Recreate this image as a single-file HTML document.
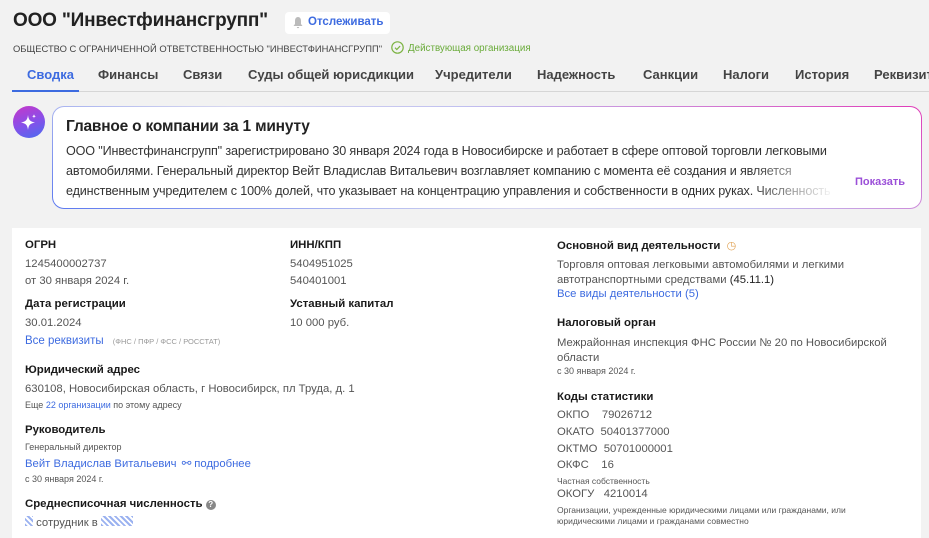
<!DOCTYPE html>
<html><head><meta charset="utf-8"><style>
*{margin:0;padding:0;box-sizing:border-box}
body{width:929px;height:529px;overflow:hidden;background:#f2f2f2;font-family:"Liberation Sans",sans-serif;color:#222;position:relative}
.a{position:absolute;white-space:nowrap}
.h{font-weight:bold;font-size:11.4px;color:#1a1a1a}
.v{font-size:11.3px;color:#555}
.s{font-size:9px;color:#555}
.l{color:#3d6be0}
.tab{position:absolute;top:67px;font-size:13px;font-weight:bold;color:#444}
</style></head><body>
<div class="a" style="left:13px;top:10px;font-size:19px;font-weight:bold;color:#222;letter-spacing:-0.2px">ООО "Инвестфинансгрупп"</div>
<div class="a" style="left:285px;top:12px;width:105px;height:22px;background:#fff;border-radius:4px"></div>
<svg class="a" style="left:292px;top:16px" width="12" height="13" viewBox="0 0 12 13"><path d="M6 1C3.8 1 3 3 3 5v3L1.5 10h9L9 8V5C9 3 8.2 1 6 1z M4.8 11a1.2 1.2 0 0 0 2.4 0z" fill="#bbb"/></svg>
<div class="a" style="left:308px;top:16px;font-size:11.5px;font-weight:bold;color:#3d6be0">Отслеживать</div>
<div class="a" style="left:13px;top:43px;font-size:9.4px;color:#444">ОБЩЕСТВО С ОГРАНИЧЕННОЙ ОТВЕТСТВЕННОСТЬЮ "ИНВЕСТФИНАНСГРУПП"</div>
<svg class="a" style="left:391px;top:41px" width="13" height="13" viewBox="0 0 13 13"><circle cx="6.5" cy="6.5" r="5.7" fill="none" stroke="#7cb342" stroke-width="1.2"/><path d="M4 6.7l1.8 1.8 3.3-3.4" fill="none" stroke="#7cb342" stroke-width="1.2"/></svg>
<div class="a" style="left:408px;top:43px;font-size:9.8px;color:#6aab3a">Действующая организация</div>
<div class="a" style="left:12px;top:91px;width:917px;height:1px;background:#d6d6d6"></div>
<div class="a" style="left:12px;top:90px;width:67px;height:2px;background:#3d6be0"></div>
<div class="tab" style="left:27px;color:#3d6be0">Сводка</div>
<div class="tab" style="left:98px">Финансы</div>
<div class="tab" style="left:183px">Связи</div>
<div class="tab" style="left:248px">Суды общей юрисдикции</div>
<div class="tab" style="left:435px">Учредители</div>
<div class="tab" style="left:537px">Надежность</div>
<div class="tab" style="left:643px">Санкции</div>
<div class="tab" style="left:723px">Налоги</div>
<div class="tab" style="left:795px">История</div>
<div class="tab" style="left:874px">Реквизиты</div>

<div class="a" style="left:13px;top:106px;width:32px;height:32px;border-radius:50%;background:linear-gradient(160deg,#c837c8,#8a4ee8 50%,#4a6cf0)"></div>
<svg class="a" style="left:19px;top:112px" width="20" height="20" viewBox="0 0 20 20"><path d="M9 3C9.6 8 11 9.5 16 10.5 11 11.5 9.6 13 9 18 8.4 13 7 11.5 2 10.5 7 9.5 8.4 8 9 3z" fill="#fff"/><path d="M15 2c.2 1.6.7 2.1 2.3 2.3-1.6.2-2.1.7-2.3 2.3-.2-1.6-.7-2.1-2.3-2.3 1.6-.2 2.1-.7 2.3-2.3z" fill="#fff"/></svg>
<div class="a" style="left:52px;top:106px;width:870px;height:103px;border-radius:12px;padding:1px;background:linear-gradient(200deg,#e03bb8,#c0c0f0 40%,#d8d8f0 60%,#5b78f0)"><div style="width:100%;height:100%;background:#fff;border-radius:11px"></div></div>
<div class="a" style="left:66px;top:118px;font-size:15.5px;font-weight:bold;color:#222;letter-spacing:-0.2px">Главное о компании за 1 минуту</div>
<div class="a" style="left:66px;top:141px;font-size:12.6px;line-height:20px;color:#333;width:780px;overflow:hidden;height:60px;letter-spacing:-0.15px">ООО "Инвестфинансгрупп" зарегистрировано 30 января 2024 года в Новосибирске и работает в сфере оптовой торговли легковыми<br>автомобилями. Генеральный директор Вейт Владислав Витальевич возглавляет компанию с момента её создания и является<br>единственным учредителем с 100% долей, что указывает на концентрацию управления и собственности в одних руках. Численность</div>
<div class="a" style="left:750px;top:160px;width:100px;height:44px;background:linear-gradient(90deg,rgba(255,255,255,0),#fff 85%)"></div>
<div class="a" style="left:855px;top:176px;font-size:11px;font-weight:bold;color:#9b4fd8">Показать</div>

<div class="a" style="left:12px;top:228px;width:909px;height:310px;background:#fff"></div>
<div class="a h" style="left:25px;top:239px">ОГРН</div>
<div class="a v" style="left:25px;top:258px">1245400002737</div>
<div class="a v" style="left:25px;top:275px">от 30 января 2024 г.</div>
<div class="a h" style="left:25px;top:298px">Дата регистрации</div>
<div class="a v" style="left:25px;top:317px">30.01.2024</div>
<div class="a" style="left:25px;top:335px;font-size:11.5px;color:#3d6be0">Все реквизиты <span style="font-size:7.5px;color:#999;margin-left:6px">(ФНС / ПФР / ФСС / РОССТАТ)</span></div>
<div class="a h" style="left:290px;top:239px">ИНН/КПП</div>
<div class="a v" style="left:290px;top:258px">5404951025</div>
<div class="a v" style="left:290px;top:275px">540401001</div>
<div class="a h" style="left:290px;top:298px">Уставный капитал</div>
<div class="a v" style="left:290px;top:317px">10 000 руб.</div>
<div class="a h" style="left:25px;top:364px">Юридический адрес</div>
<div class="a v" style="left:25px;top:383px">630108, Новосибирская область, г Новосибирск, пл Труда, д. 1</div>
<div class="a s" style="left:25px;top:400px">Еще <span class="l">22 организации</span> по этому адресу</div>
<div class="a h" style="left:25px;top:424px">Руководитель</div>
<div class="a s" style="left:25px;top:442px">Генеральный директор</div>
<div class="a" style="left:25px;top:457px;font-size:11.3px;color:#3d6be0">Вейт Владислав Витальевич <span style="margin-left:2px">⚯ подробнее</span></div>
<div class="a s" style="left:25px;top:474px">с 30 января 2024 г.</div>
<div class="a h" style="left:25px;top:498px">Среднесписочная численность <span style="display:inline-block;width:10px;height:10px;border-radius:50%;background:#888;color:#fff;font-size:8px;text-align:center;line-height:10px;vertical-align:0">?</span></div>
<div class="a v" style="left:25px;top:516px"><span style="display:inline-block;width:8px;height:10px;background:repeating-linear-gradient(45deg,#9bb2f0 0 2px,#fff 2px 4px)"></span> сотрудник в <span style="display:inline-block;width:32px;height:10px;background:repeating-linear-gradient(45deg,#9bb2f0 0 2px,#fff 2px 4px)"></span></div>

<div class="a h" style="left:557px;top:239px">Основной вид деятельности <span style="color:#e0a050;font-weight:normal;font-size:11px;margin-left:3px">◷</span></div>
<div class="a v" style="left:557px;top:258px;line-height:15px">Торговля оптовая легковыми автомобилями и легкими<br>автотранспортными средствами <span style="color:#222">(45.11.1)</span></div>
<div class="a" style="left:557px;top:288px;font-size:11.3px;color:#3d6be0">Все виды деятельности (5)</div>
<div class="a h" style="left:557px;top:317px">Налоговый орган</div>
<div class="a v" style="left:557px;top:336px;line-height:15px">Межрайонная инспекция ФНС России № 20 по Новосибирской<br>области</div>
<div class="a s" style="left:557px;top:366px">с 30 января 2024 г.</div>
<div class="a h" style="left:557px;top:391px">Коды статистики</div>
<div class="a v" style="left:557px;top:409px">ОКПО&nbsp;&nbsp;&nbsp;&nbsp;79026712</div>
<div class="a v" style="left:557px;top:426px">ОКАТО&nbsp;&nbsp;50401377000</div>
<div class="a v" style="left:557px;top:443px">ОКТМО&nbsp;&nbsp;50701000001</div>
<div class="a v" style="left:557px;top:459px">ОКФС&nbsp;&nbsp;&nbsp;&nbsp;16</div>
<div class="a" style="left:557px;top:476px;font-size:8.5px;color:#555">Частная собственность</div>
<div class="a v" style="left:557px;top:488px">ОКОГУ&nbsp;&nbsp;&nbsp;4210014</div>
<div class="a" style="left:557px;top:505px;font-size:8.5px;color:#555;line-height:11px">Организации, учрежденные юридическими лицами или гражданами, или<br>юридическими лицами и гражданами совместно</div>
</body></html>
